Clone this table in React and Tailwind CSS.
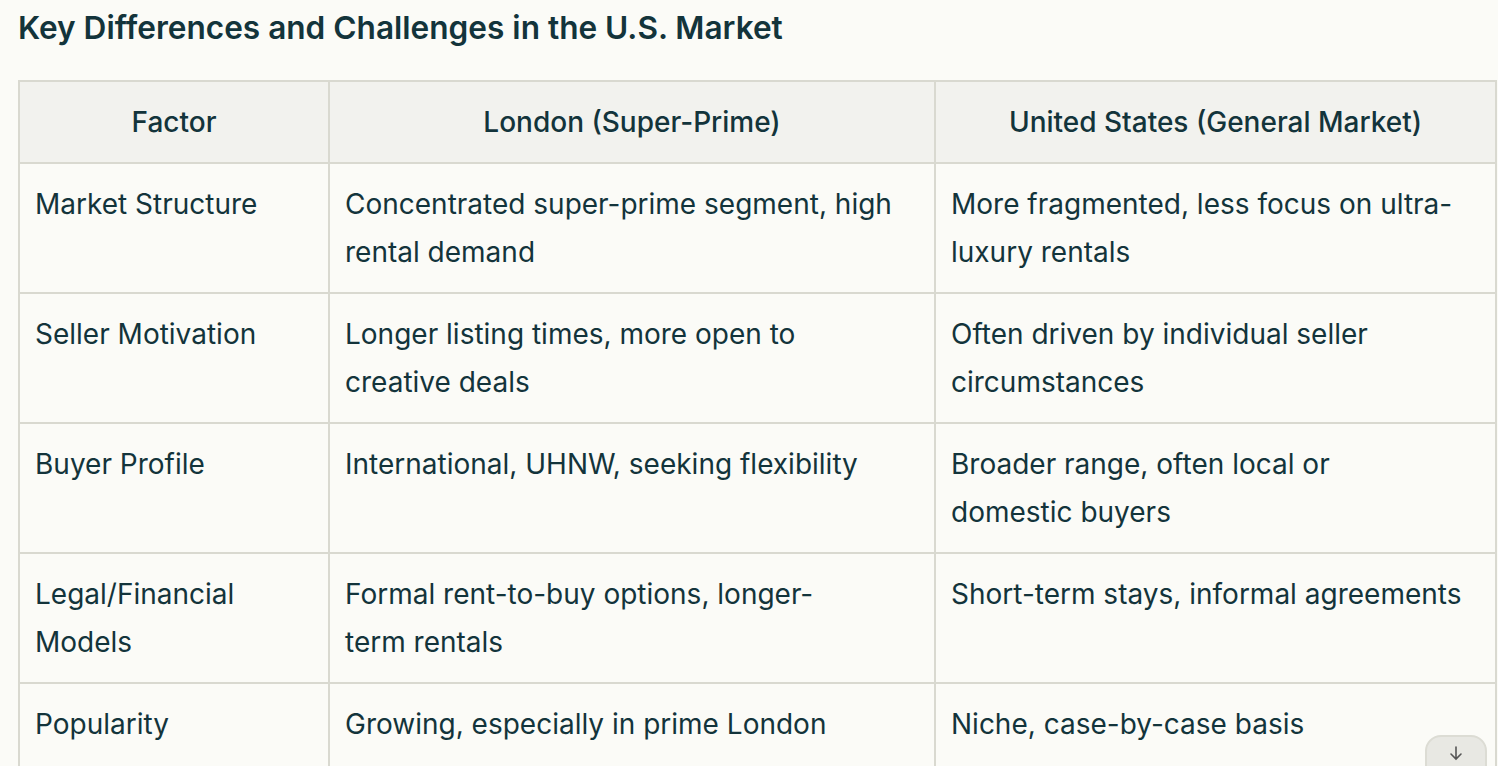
import React from "react";

const rows = [
  ["Market Structure", "Concentrated super-prime segment, high\nrental demand", "More fragmented, less focus on ultra-\nluxury rentals"],
  ["Seller Motivation", "Longer listing times, more open to\ncreative deals", "Often driven by individual seller\ncircumstances"],
  ["Buyer Profile", "International, UHNW, seeking flexibility", "Broader range, often local or\ndomestic buyers"],
  ["Legal/Financial\nModels", "Formal rent-to-buy options, longer-\nterm rentals", "Short-term stays, informal agreements"],
  ["Popularity", "Growing, especially in prime London", "Niche, case-by-case basis"],
];

export default function App() {
  return (
    <div
      className="h-[766px] w-full overflow-hidden bg-[#fbfbf7] pl-[18px] text-[#13343b]"
      style={{ fontFamily: "Inter, 'Liberation Sans', sans-serif" }}
    >
      <h2 className="pt-[8px] text-[31.6px] font-semibold leading-[40px]">
        Key Differences and Challenges in the U.S. Market
      </h2>
      <div className="relative mt-[32px]">
        <table className="w-[1479px] table-fixed border-collapse text-[28px] leading-[48px]">
          <colgroup>
            <col className="w-[310px]" />
            <col className="w-[606px]" />
            <col />
          </colgroup>
          <thead>
            <tr className="bg-[#f2f2ee]">
              <th className="border-2 border-[#d9d9d0] px-4 py-4 font-medium">Factor</th>
              <th className="border-2 border-[#d9d9d0] px-4 py-4 font-medium">London (Super-Prime)</th>
              <th className="border-2 border-[#d9d9d0] px-4 py-4 font-medium">United States (General Market)</th>
            </tr>
          </thead>
          <tbody>
            {rows.map((r) => (
              <tr key={r[0]}>
                {r.map((c, i) => (
                  <td key={i} className="h-[128px] whitespace-pre-line border-2 border-[#d9d9d0] pl-[15px] pr-4 pt-4 pb-[16px] align-top">
                    {c}
                  </td>
                ))}
              </tr>
            ))}
          </tbody>
        </table>
        <button className="absolute left-[1407px] top-[655px] flex h-[40px] w-[62px] items-start justify-center rounded-t-[16px] border-2 border-[#dcdcd4] bg-[#e8e8e3] pt-[8px] text-[#555]">
          <svg width="14" height="16" viewBox="0 0 14 16" fill="none" stroke="currentColor" strokeWidth="1.6" strokeLinecap="round">
            <path d="M7 2v12M2 9l5 5 5-5" />
          </svg>
        </button>
      </div>
    </div>
  );
}
